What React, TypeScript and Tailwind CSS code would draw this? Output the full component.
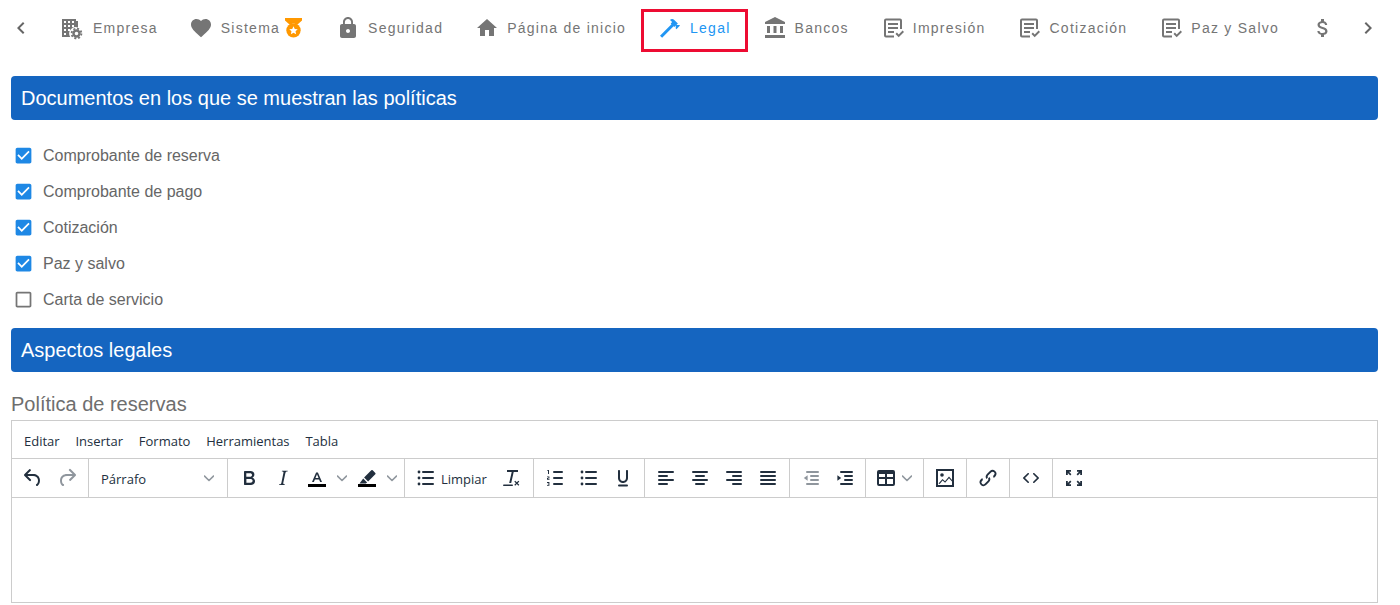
import React from "react";
import { MdFavorite, MdLock, MdHome, MdAccountBalance, MdAttachMoney, MdChevronLeft, MdChevronRight } from "react-icons/md";

const ReceiptCheck = () => (
  <svg width="24" height="24" viewBox="0 0 24 24" fill="#757575">
    <path d="M5 2.5h14a2 2 0 0 1 2 2V13h-2V4.5H5v15h8v2H5a2 2 0 0 1-2-2v-15a2 2 0 0 1 2-2z" />
    <rect x="7" y="7" width="10" height="2" />
    <rect x="7" y="11" width="10" height="2" />
    <rect x="7" y="15" width="6" height="2" />
    <path d="M14.5 18l1.4-1.4 1.8 1.8 3.9-3.9 1.4 1.4-5.3 5.3z" />
  </svg>
);

const BuildingGear = () => (
  <svg width="24" height="24" viewBox="0 0 24 24" fill="#757575">
    <path d="M3 3h14v2h2v6.5a6.5 6.5 0 0 0-7.8 9.5H3z" />
    <g fill="#fff">
      <rect x="5" y="5" width="2" height="2" /><rect x="9" y="5" width="2" height="2" /><rect x="13" y="5" width="2" height="2" />
      <rect x="5" y="9" width="2" height="2" /><rect x="9" y="9" width="2" height="2" /><rect x="13" y="9" width="2" height="2" />
      <rect x="5" y="13" width="2" height="2" /><rect x="9" y="13" width="2" height="2" />
      <rect x="5" y="17" width="2" height="2" />
    </g>
    <circle cx="17.5" cy="17.5" r="3" fill="none" stroke="#757575" strokeWidth="2.4" />
    <circle cx="17.5" cy="17.5" r="4.9" fill="none" stroke="#757575" strokeWidth="1.8" strokeDasharray="2 1.85" />
  </svg>
);

const Hammer = () => (
  <svg width="24" height="24" viewBox="0 0 24 24" fill="#2196f3">
    <path d="M2 19.63L13.43 8.2L12.72 7.5L14.14 6.07L12 3.89C13.2 2.7 15.09 2.7 16.27 3.89L19.87 7.5L18.45 8.91H21.29L22 9.62L18.45 13.21L17.74 12.5V9.62L16.27 11.04L15.56 10.33L4.13 21.76L2 19.63Z" />
  </svg>
);

const Medal = () => (
  <svg width="17" height="20" viewBox="0 0 18 21" className="ml-[5px] shrink-0">
    <path d="M0 0h18v2.5l-5 4.6-4-1.5-4 1.5-5-4.6z" fill="#ff9800" />
    <circle cx="9" cy="13" r="7.6" fill="#ff9800" />
    <path d="M9 8.6l1.35 2.9 3.15.35-2.35 2.1.65 3.1L9 15.5l-2.8 1.55.65-3.1-2.35-2.1 3.15-.35z" fill="#fff" />
  </svg>
);

type TabItem = { icon: React.ReactNode; label: string; extra?: React.ReactNode; active?: boolean; cls?: string };

const grayIcon = (I: React.ComponentType<{ size?: number; color?: string }>) => <I size={24} color="#757575" />;

const tabs: TabItem[] = [
  { icon: <BuildingGear />, label: "Empresa", cls: "gap-[10px] pl-[16px] pr-[15px]" },
  { icon: grayIcon(MdFavorite), label: "Sistema", extra: <Medal />, cls: "gap-[8px] pl-[16px] pr-[18px]" },
  { icon: grayIcon(MdLock), label: "Seguridad", cls: "gap-[8px] px-[16px]" },
  { icon: grayIcon(MdHome), label: "Página de inicio", cls: "gap-[8px] px-[16px]" },
  { icon: <Hammer />, label: "Legal", active: true, cls: "gap-[8px] px-[16px]" },
  { icon: grayIcon(MdAccountBalance), label: "Bancos", cls: "gap-[8px] px-[16px]" },
  { icon: <ReceiptCheck />, label: "Impresión", cls: "gap-[8px] px-[16px]" },
  { icon: <ReceiptCheck />, label: "Cotización", cls: "gap-[8px] px-[16px]" },
  { icon: <ReceiptCheck />, label: "Paz y Salvo", cls: "gap-[8px] px-[16px]" },
];

const Tab = ({ t }: { t: TabItem }) => (
  <div
    className={`relative flex h-[56px] shrink-0 items-center text-[14px] tracking-[1.25px] ${t.cls ?? ""} ${
      t.active ? "text-[#2196f3]" : "text-[#757575]"
    }`}
  >
    {t.active && <div className="absolute left-[-1px] right-[-1px] top-[9px] h-[43px] border-[3px] border-[#ed0c32]" />}
    {t.icon}
    <span className="flex items-center whitespace-nowrap">
      {t.label}
      {t.extra}
    </span>
  </div>
);

const SectionBar = ({ children }: { children: React.ReactNode }) => (
  <div className="flex h-[44px] items-center rounded-[4px] bg-[#1565c0] px-[10px] text-[20px] text-white">{children}</div>
);

const Check = ({ label, on }: { label: string; on: boolean }) => (
  <div className="flex h-[36px] items-center text-[16px] text-[#666666]">
    <div className="flex w-[32px] shrink-0 items-center justify-center pr-[8px]">
      {on ? (
        <svg width="21" height="21" viewBox="0 0 24 24" fill="#1e88e5" className="shrink-0">
          <path d="M19 3H5c-1.11 0-2 .9-2 2v14c0 1.1.89 2 2 2h14c1.1 0 2-.9 2-2V5c0-1.11-.89-2-2-2zm-9 14l-5-5 1.41-1.41L10 14.17l7.59-7.59L19 8l-9 9z" />
        </svg>
      ) : (
        <svg width="21" height="21" viewBox="0 0 24 24" fill="#757575" className="shrink-0">
          <path d="M19 5v14H5V5h14m0-2H5c-1.1 0-2 .9-2 2v14c0 1.1.9 2 2 2h14c1.1 0 2-.9 2-2V5c0-1.1-.9-2-2-2z" />
        </svg>
      )}
    </div>
    <span className="pt-[2px]">{label}</span>
  </div>
);

const INK = "#222f3e";

const I = ({ children, dim }: { children: React.ReactNode; dim?: boolean }) => (
  <svg width="24" height="24" viewBox="0 0 24 24" fill={INK} className={dim ? "opacity-50" : ""}>
    {children}
  </svg>
);

const Bars = ({ rows }: { rows: [number, number, number][] }) => (
  <>
    {rows.map(([x, y, w], i) => (
      <rect key={i} x={x} y={y} width={w} height="2" rx="1" />
    ))}
  </>
);

const Btn = ({ children, w = "w-[34px]" }: { children: React.ReactNode; w?: string }) => (
  <div className={`flex h-[34px] shrink-0 items-center justify-center ${w}`}>{children}</div>
);

const Chev = ({ w = "w-[16px]" }: { w?: string }) => (
  <div className={`flex h-[34px] shrink-0 items-center justify-center ${w}`}>
    <svg width="10" height="10" viewBox="0 0 10 10" fill="none" stroke={INK} strokeOpacity="0.5" strokeWidth="1.6" strokeLinecap="round" strokeLinejoin="round" className="shrink-0">
      <path d="M0.5 3l4.5 4.5L9.5 3" />
    </svg>
  </div>
);

const Group = ({ w, children, last }: { w: string; children: React.ReactNode; last?: boolean }) => (
  <div className={`flex h-full shrink-0 items-center pl-[4px] ${w} ${last ? "" : "border-r border-[#cccccc]"}`}>{children}</div>
);

const Undo = () => (
  <I><path d="M6.4 8H12c3.7 0 6.2 2 6.8 5.1.6 2.7-.4 5.6-2.3 6.8a1 1 0 0 1-1-1.8c1.1-.6 1.8-2.7 1.4-4.6-.5-2.1-2.1-3.5-4.9-3.5H6.4l3.3 3.3a1 1 0 1 1-1.4 1.4l-5-5a1 1 0 0 1 0-1.4l5-5a1 1 0 0 1 1.4 1.4L6.4 8z" /></I>
);
const Redo = () => (
  <I dim><path d="M17.6 10H12c-2.8 0-4.4 1.4-4.9 3.5-.4 2 .3 4 1.4 4.6a1 1 0 1 1-1 1.8c-2-1.2-2.9-4.1-2.3-6.8.6-3 3-5.1 6.8-5.1h5.6l-3.3-3.3a1 1 0 1 1 1.4-1.4l5 5a1 1 0 0 1 0 1.4l-5 5a1 1 0 0 1-1.4-1.4l3.3-3.3z" /></I>
);
const Bold = () => (
  <I><path d="M7.8 19c-.3 0-.5 0-.6-.2l-.2-.5V5.7c0-.2 0-.4.2-.5l.6-.2h5c1.5 0 2.7.3 3.5 1 .7.6 1.1 1.4 1.1 2.5a3 3 0 0 1-.6 1.9c-.4.6-1 1-1.6 1.2.4.1.9.3 1.3.6s.8.7 1 1.2c.4.4.5 1 .5 1.6 0 1.3-.4 2.3-1.3 3-.8.7-2.1 1-3.8 1H7.8zm5-8.3c.6 0 1.2-.1 1.6-.5.4-.3.6-.7.6-1.3 0-1.1-.8-1.7-2.3-1.7H9.3v3.5h3.4zm.5 6c.7 0 1.3-.1 1.7-.4.4-.4.6-.9.6-1.5s-.2-1-.7-1.4c-.4-.3-1-.4-2-.4H9.4v3.8h4z" /></I>
);
const Italic = () => (
  <I><path d="M16.7 4.7l-.1.9h-.3c-.6 0-1 0-1.4.3-.3.3-.4.6-.5 1.1l-2.1 9.8v.6c0 .5.4.8 1.4.8h.2l-.2.8H8l.2-.8h.2c1.1 0 1.8-.5 2-1.5l2-9.8.1-.5c0-.6-.4-.8-1.4-.8h-.3l.2-.9h5.8z" /></I>
);
const TextColor = () => (
  <I>
    <path d="M12.9 6.5h-1.8L7 16h1.9l1-2.5h4.2l1 2.5H17l-4.1-9.5zm-2.4 5.4L12 8.2l1.5 3.7h-3z" />
    <rect x="3" y="18" width="18" height="3" fill="#000" />
  </I>
);
const Highlight = () => (
  <I>
    <path d="M17.7 4.3l2.6 2.6a1 1 0 0 1 0 1.4l-7.2 7.2-4-4 7.2-7.2a1 1 0 0 1 1.4 0zM8.2 12.5l3.9 3.9-1.2 1.1H4.5l3.7-5z" />
    <rect x="3" y="18" width="18" height="3" fill="#000" />
  </I>
);
const Dots = () => (
  <>
    <circle cx="5" cy="6" r="1.4" /><circle cx="5" cy="12" r="1.4" /><circle cx="5" cy="18" r="1.4" />
    <Bars rows={[[8, 5, 12], [8, 11, 12], [8, 17, 12]]} />
  </>
);
const Bullet = () => <I><Dots /></I>;
const Numbered = () => (
  <I>
    <Bars rows={[[10, 5, 10], [10, 11, 10], [10, 17, 10]]} />
    <path d="M5 4h1v4H5V5H4.3V4.3zM4 10.5h2.4v1.9H5v.6h1.5v.8H4v-1.9h1.4v-.6H4zM4 16h2.4v3.8H4V19h1.5v-.7H4.6v-.6h.9V17H4z" />
  </I>
);
const ClearFormat = () => (
  <I>
    <path d="M8 4h11v2h-4.3l-2.5 11h-2L12.7 6H8z" />
    <rect x="4" y="18.4" width="10" height="1.6" rx=".8" />
    <path d="M15.3 15.6l.9-.9 1.6 1.6 1.6-1.6.9.9-1.6 1.6 1.6 1.6-.9.9-1.6-1.6-1.6 1.6-.9-.9 1.6-1.6z" />
  </I>
);
const Underline = () => (
  <I>
    <path d="M16 4c.6 0 1 .4 1 1v7c0 2.8-2.2 5-5 5s-5-2.2-5-5V5c0-.6.4-1 1-1s1 .4 1 1v7c0 1.7 1.3 3 3 3s3-1.3 3-3V5c0-.6.4-1 1-1z" />
    <rect x="7" y="18.5" width="10" height="2" rx="1" />
  </I>
);
const Align = ({ rows }: { rows: [number, number, number][] }) => <I><Bars rows={rows} /></I>;
const Outdent = () => (
  <I dim>
    <Bars rows={[[7, 5, 13], [11, 9, 9], [11, 13, 9], [7, 17, 13]]} />
    <path d="M8.6 9.2v5.6L4.8 12z" />
  </I>
);
const Indent = () => (
  <I>
    <Bars rows={[[7, 5, 13], [11, 9, 9], [11, 13, 9], [7, 17, 13]]} />
    <path d="M4.4 9.2v5.6L8.2 12z" />
  </I>
);
const TableIcon = () => (
  <I>
    <path d="M5 4h14a2 2 0 0 1 2 2v12a2 2 0 0 1-2 2H5a2 2 0 0 1-2-2V6a2 2 0 0 1 2-2zm0 4v3h6V8H5zm8 0v3h6V8h-6zM5 13v5h6v-5H5zm8 0v5h6v-5h-6z" fillRule="evenodd" />
  </I>
);
const ImageIcon = () => (
  <I>
    <path d="M3 3h18v18H3V3zm2 2v14h14V5H5z" fillRule="evenodd" />
    <circle cx="9" cy="9" r="1.8" />
    <path d="M5.5 17.5l4-4.5 2.5 2.2 4-4.7 3 3.5v1.6l-3-3.4-3.9 4.6-2.5-2.2-2.9 3.4z" />
  </I>
);
const LinkIcon = () => (
  <I>
    <path d="M6.2 12.4l-1.6 1.7a3.9 3.9 0 0 0 5.5 5.5l3-3a3.9 3.9 0 0 0 .4-5l-1.4 1.3c.4.7.3 1.6-.4 2.3l-3 3a1.9 1.9 0 1 1-2.7-2.7l1-1c-.3-.6-.6-1.4-.7-2.1z" transform="translate(0 -.5)" />
    <path d="M17.8 11.6l1.6-1.7a3.9 3.9 0 0 0-5.5-5.5l-3 3a3.9 3.9 0 0 0-.4 5l1.4-1.3c-.4-.7-.3-1.6.4-2.3l3-3a1.9 1.9 0 1 1 2.7 2.7l-1 1c.3.6.6 1.4.7 2.1z" transform="translate(0 .5)" />
  </I>
);
const CodeIcon = () => (
  <I>
    <path d="M9.8 15.7c.3.3.3.8 0 1-.3.4-.9.4-1.2 0l-4.4-4.1a.8.8 0 0 1 0-1.2l4.4-4.2c.3-.3.9-.3 1.2 0 .3.3.3.8 0 1.1L6 12l3.8 3.7zM14.2 15.7L18 12l-3.8-3.7a.8.8 0 0 1 0-1.1c.3-.3.9-.3 1.2 0l4.4 4.2c.3.3.3.9 0 1.2l-4.4 4.1c-.3.4-.9.4-1.2 0a.8.8 0 0 1 0-1z" />
  </I>
);
const FullIcon = () => (
  <I>
    <path d="M4 4h5v1.8H7l2.4 2.4-1.2 1.2L5.8 7v2H4zM20 4v5h-1.8V7l-2.4 2.4-1.2-1.2L17 5.8h-2V4zM4 20v-5h1.8v2l2.4-2.4 1.2 1.2L7 18.2h2V20zM20 20h-5v-1.8h2l-2.4-2.4 1.2-1.2 2.4 2.4v-2H20z" />
  </I>
);

const TOP: [number, number, number][] = [[4, 5, 16]];

export default function App() {
  return (
    <div className="h-[605px] w-[1400px] overflow-hidden bg-white font-['Liberation_Sans',sans-serif]">
      <div className="flex h-[56px] w-[1388px] items-center overflow-hidden">
        <div className="flex h-[56px] w-[42px] shrink-0 items-center justify-center">
          <MdChevronLeft size={24} color="#666" />
        </div>
        <div className="flex w-[1306px] shrink-0 overflow-hidden pl-[1px]">
          {tabs.map((t) => (
            <Tab key={t.label} t={t} />
          ))}
          <div className="flex h-[56px] shrink-0 items-center px-[16px]">{grayIcon(MdAttachMoney)}</div>
        </div>
        <div className="flex h-[56px] w-[40px] shrink-0 items-center justify-center">
          <MdChevronRight size={24} color="#666" />
        </div>
      </div>

      <div className="ml-[11px] mt-[20px] w-[1367px]">
        <SectionBar>Documentos en los que se muestran las políticas</SectionBar>
        <div className="mt-[17px] flex flex-col">
          <Check label="Comprobante de reserva" on />
          <Check label="Comprobante de pago" on />
          <Check label="Cotización" on />
          <Check label="Paz y salvo" on />
          <Check label="Carta de servicio" on={false} />
        </div>
        <div className="mt-[11px]">
          <SectionBar>Aspectos legales</SectionBar>
        </div>
        <div className="mt-[20px] h-[24px] text-[20px] leading-[24px] text-[#6e6e6e]">Política de reservas</div>
        <div className="mt-[4px] h-[183px] border border-[#cccccc] font-['Open_Sans',sans-serif] text-[13px] text-[#222f3e]">
          <div className="flex h-[38px] items-center gap-[15.8px] border-b border-[#cccccc] pl-[12px] pt-[5px]">
            <span>Editar</span>
            <span>Insertar</span>
            <span>Formato</span>
            <span>Herramientas</span>
            <span>Tabla</span>
          </div>
          <div className="flex h-[39px] items-center border-b border-[#cccccc]">
            <Group w="w-[77px]"><Btn><Undo /></Btn><Btn><Redo /></Btn></Group>
            <Group w="w-[139px]">
              <div className="flex h-[34px] w-[130px] items-center justify-between pl-[8px] pr-[6px]">
                <span className="pt-[3px]">Párrafo</span>
                <Chev />
              </div>
            </Group>
            <Group w="w-[177px]">
              <Btn><Bold /></Btn><Btn><Italic /></Btn>
              <Btn><TextColor /></Btn><Chev />
              <Btn><Highlight /></Btn><Chev />
            </Group>
            <Group w="w-[129px]">
              <Btn><Bullet /></Btn>
              <span className="ml-[-2px] w-[53px] pt-[3px]">Limpiar</span>
              <Btn><ClearFormat /></Btn>
            </Group>
            <Group w="w-[111px]"><Btn><Numbered /></Btn><Btn><Bullet /></Btn><Btn><Underline /></Btn></Group>
            <Group w="w-[145px]">
              <Btn><Align rows={[...TOP, [4, 9, 10], [4, 13, 16], [4, 17, 10]]} /></Btn>
              <Btn><Align rows={[...TOP, [7, 9, 10], [4, 13, 16], [7, 17, 10]]} /></Btn>
              <Btn><Align rows={[...TOP, [10, 9, 10], [4, 13, 16], [10, 17, 10]]} /></Btn>
              <Btn><Align rows={[...TOP, [4, 9, 16], [4, 13, 16], [4, 17, 16]]} /></Btn>
            </Group>
            <Group w="w-[76px]"><Btn><Outdent /></Btn><Btn><Indent /></Btn></Group>
            <Group w="w-[58px]"><Btn w="w-[32px]"><TableIcon /></Btn><Chev w="w-[10px]" /></Group>
            <Group w="w-[43px]"><Btn><ImageIcon /></Btn></Group>
            <Group w="w-[43px]"><Btn><LinkIcon /></Btn></Group>
            <Group w="w-[43px]"><Btn><CodeIcon /></Btn></Group>
            <Group w="w-[43px]" last><Btn><FullIcon /></Btn></Group>
          </div>
        </div>
      </div>
    </div>
  );
}
